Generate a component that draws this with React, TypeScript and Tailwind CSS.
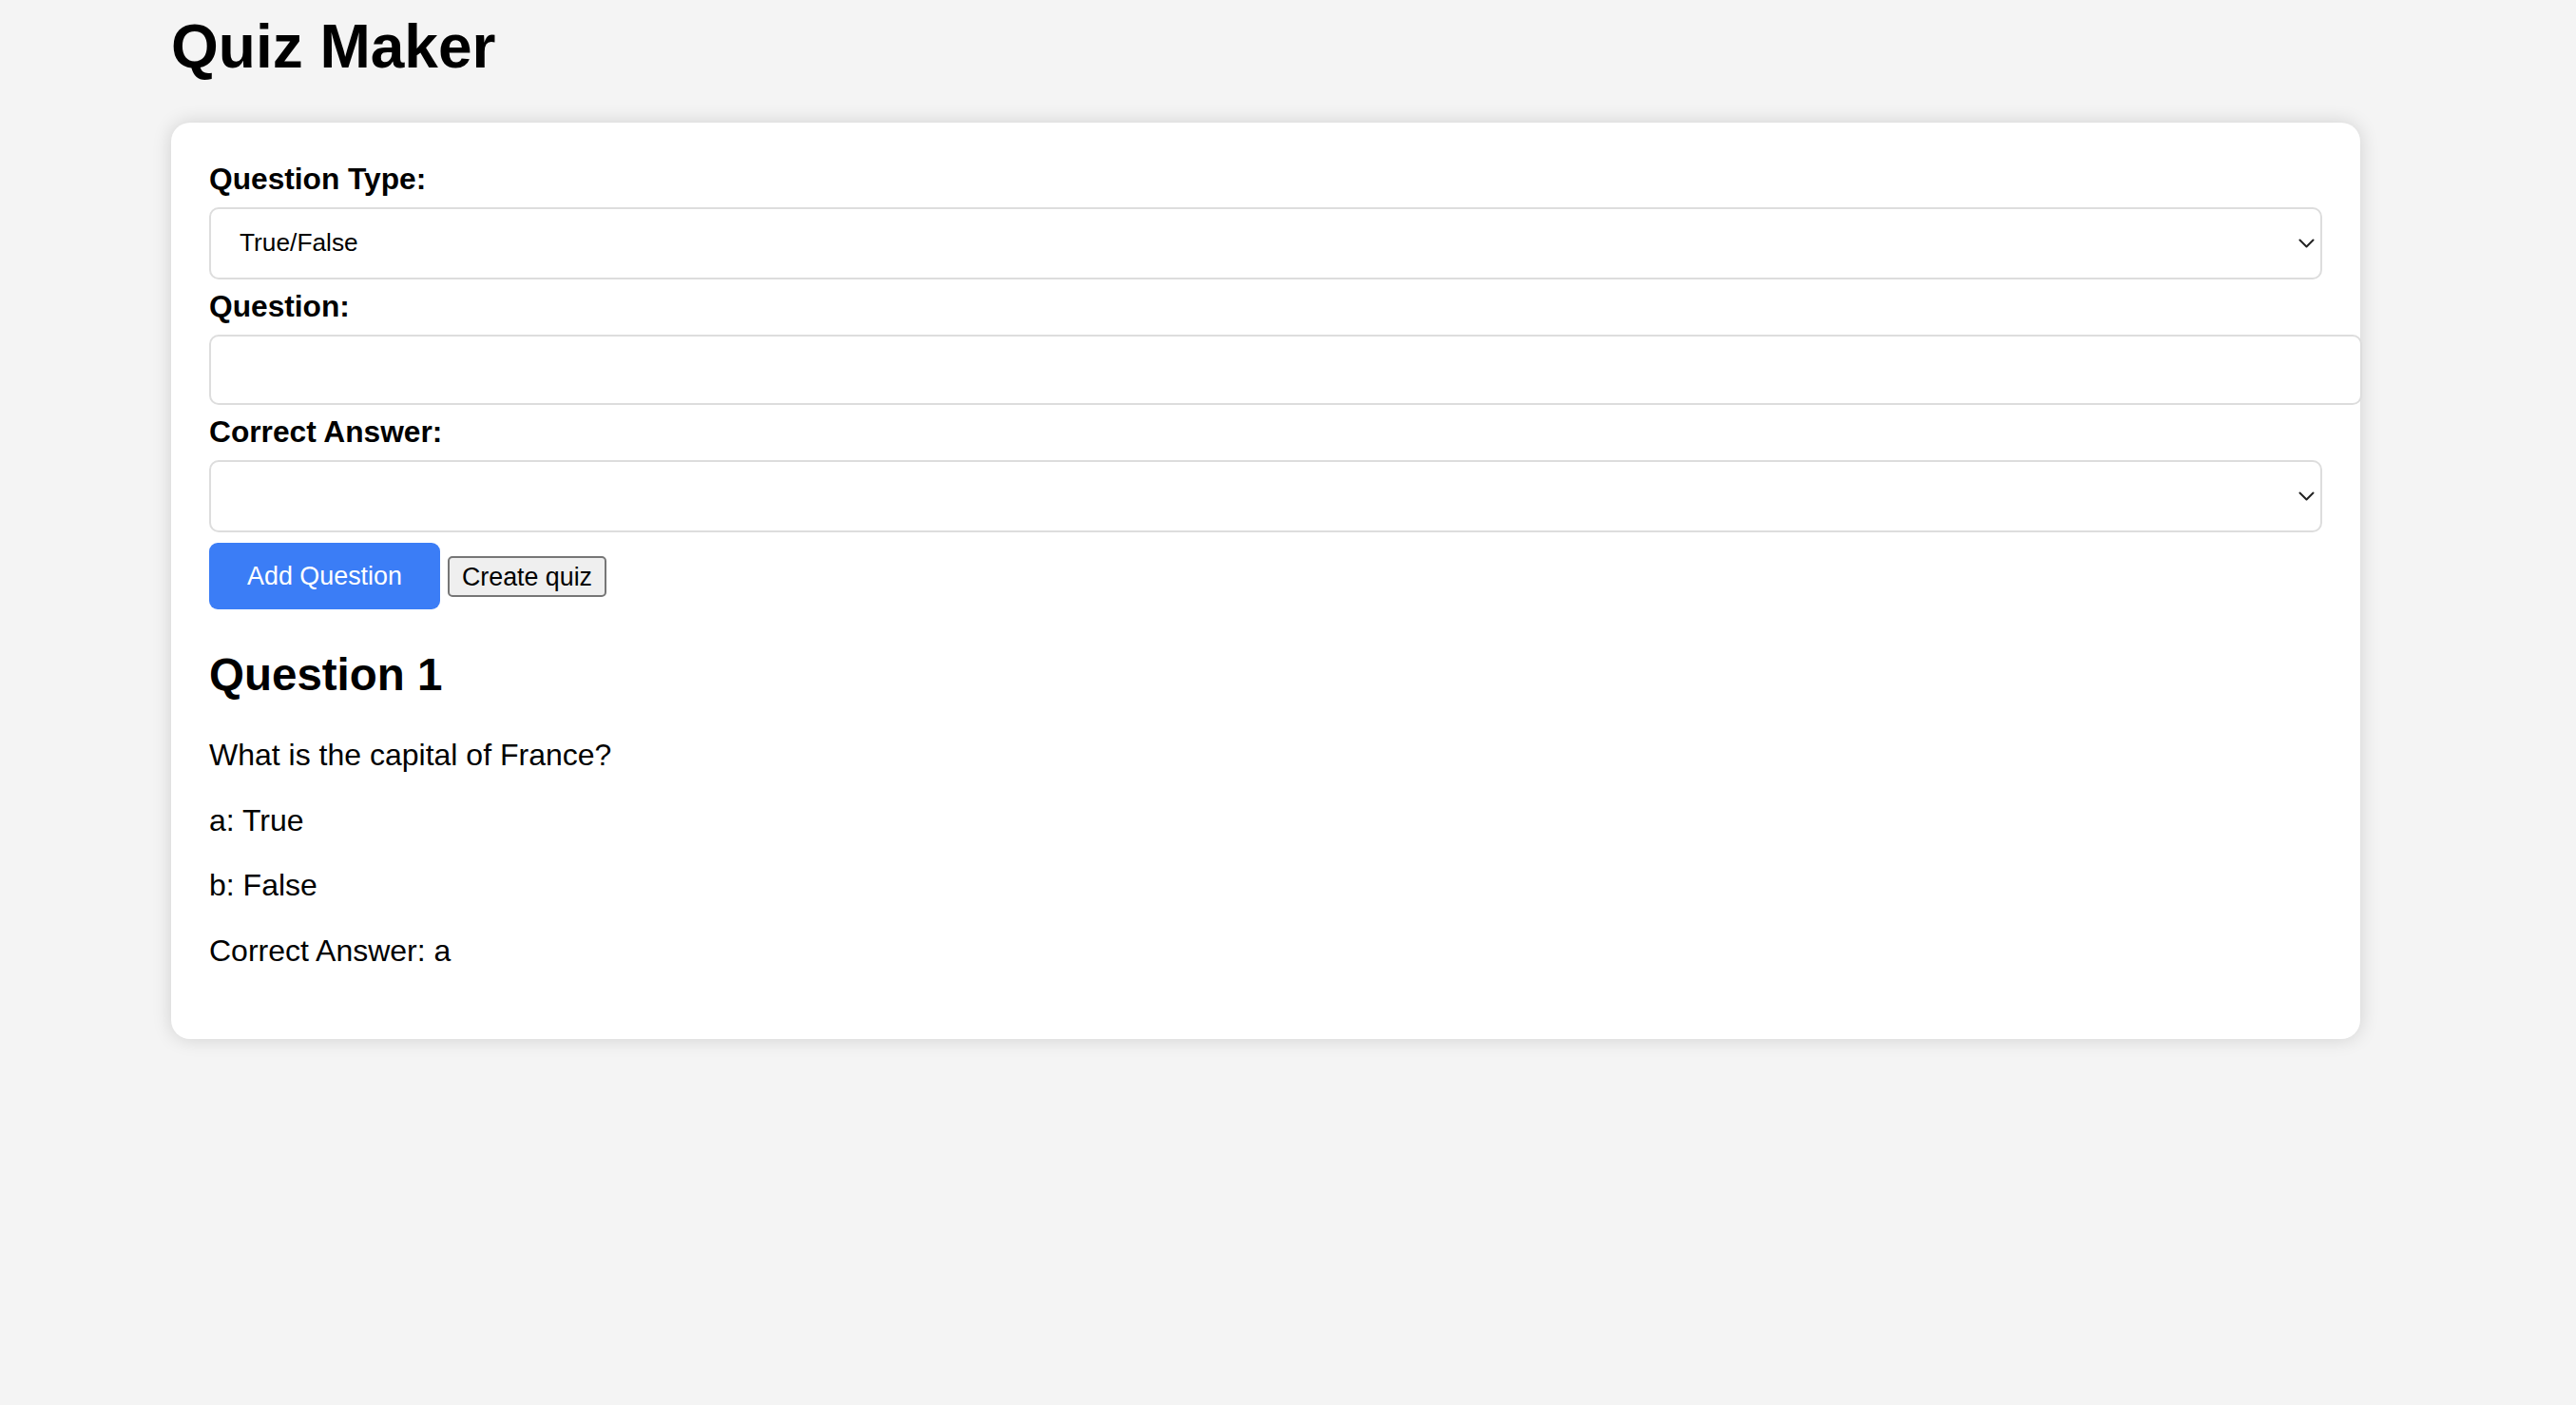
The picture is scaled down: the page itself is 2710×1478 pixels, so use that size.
import React, { useState } from "react";

const Chevron = () => (
  <svg
    className="pointer-events-none absolute right-[8px] top-1/2 -translate-y-1/2"
    width="17"
    height="10"
    viewBox="0 0 17 10"
    fill="none"
  >
    <path d="M1.5 1.5 L8.5 8.5 L15.5 1.5" stroke="#222" strokeWidth="2" strokeLinecap="round" strokeLinejoin="round" />
  </svg>
);

export default function App() {
  const [type, setType] = useState("tf");
  const [question, setQuestion] = useState("");
  const [answer, setAnswer] = useState("");

  const questions = [
    {
      text: "What is the capital of France?",
      options: ["True", "False"],
      correct: "a",
    },
  ];

  return (
    <div className="min-h-screen bg-[#f4f4f4] text-black font-['Liberation_Sans',Arial,sans-serif]">
      <div className="ml-[180px] w-[2303px] pt-[18px]">
        <h1 className="text-[64px] leading-[63px] font-bold">Quiz Maker</h1>

        <div className="mt-[48px] bg-white rounded-[20px] shadow-[0_0_20px_rgba(0,0,0,0.15)] pt-[41px] px-[40px] pb-[75px]">
          <label className="block text-[31.7px] leading-[36px] font-bold mb-[12px]">
            Question Type:
          </label>
          <div className="relative">
            <select
              value={type}
              onChange={(e) => setType(e.target.value)}
              className="block w-full h-[76px] appearance-none bg-white border-2 border-[#dddddd] rounded-[10px] pl-[30px] text-[26.3px] outline-none"
            >
              <option value="tf">True/False</option>
              <option value="mc">Multiple Choice</option>
            </select>
            <Chevron />
          </div>

          <label className="block mt-[10px] text-[31.7px] leading-[36px] font-bold mb-[12px]">
            Question:
          </label>
          <input
            value={question}
            onChange={(e) => setQuestion(e.target.value)}
            className="block w-[calc(100%+42px)] h-[74px] border-2 border-[#dddddd] rounded-[10px] px-[20px] text-[26px] outline-none"
          />

          <label className="block mt-[10px] text-[31.7px] leading-[36px] font-bold mb-[12px]">
            Correct Answer:
          </label>
          <div className="relative">
            <select
              value={answer}
              onChange={(e) => setAnswer(e.target.value)}
              className="block w-full h-[76px] appearance-none bg-white border-2 border-[#dddddd] rounded-[10px] pl-[30px] text-[26.3px] outline-none"
            >
              <option value=""></option>
              <option value="a">True</option>
              <option value="b">False</option>
            </select>
            <Chevron />
          </div>

          <div className="mt-[11px] flex items-center gap-[8px]">
            <button className="h-[70px] px-[40px] bg-[#3b7df6] text-white text-[26.9px] rounded-[9px]">
              Add Question
            </button>
            <button className="h-[43px] px-[13px] border-2 border-[#767676] bg-[#efefef] rounded-[5px] text-[26.8px]">
              Create quiz
            </button>
          </div>

          {questions.map((q, i) => (
            <div key={i}>
              <h2 className="mt-[42px] text-[47.5px] leading-[54px] font-bold">
                Question {i + 1}
              </h2>
              <p className="mt-[39px] text-[32px] leading-[36.5px]">{q.text}</p>
              {q.options.map((opt, j) => (
                <p key={opt} className="mt-[32px] text-[32px] leading-[36.5px]">
                  {String.fromCharCode(97 + j)}: {opt}
                </p>
              ))}
              <p className="mt-[32px] text-[32px] leading-[36.5px]">
                Correct Answer: {q.correct}
              </p>
            </div>
          ))}
        </div>
      </div>
    </div>
  );
}
